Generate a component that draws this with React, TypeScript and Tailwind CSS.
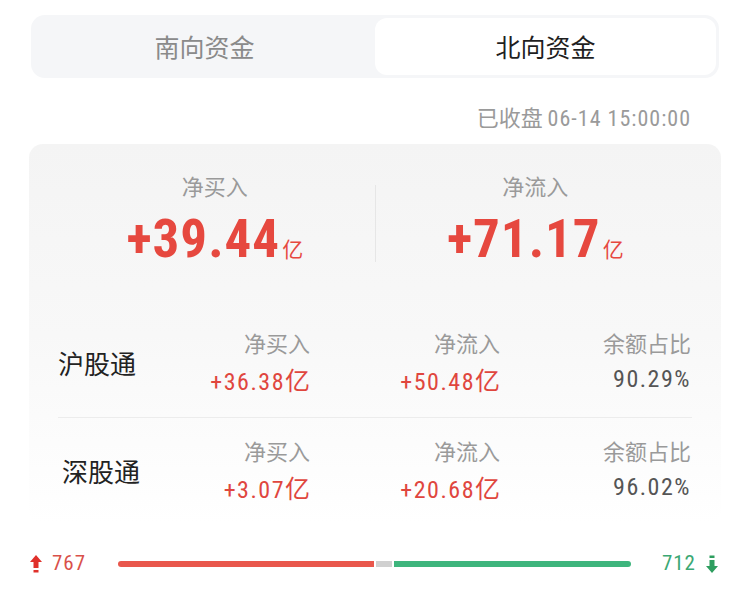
const cjk = "font-['Noto_Sans_CJK_SC',sans-serif]";
const num = "font-['Roboto_Condensed','Noto_Sans_CJK_SC',sans-serif]";

const rows = [
  { name: "沪股通", buy: "+36.38", flow: "+50.48", ratio: "90.29%" },
  { name: "深股通", buy: "+3.07", flow: "+20.68", ratio: "96.02%" },
];

function UpArrow() {
  return (
    <svg width="12" height="18" viewBox="0 0 12 18">
      <path d="M6 0 L12 7 L8.5 7 L8.5 13 L3.5 13 L3.5 7 L0 7 Z" fill="#e0312b" />
      <rect x="3.5" y="15" width="5" height="2.5" fill="#e0312b" />
    </svg>
  );
}

function DownArrow() {
  return (
    <svg width="12" height="18" viewBox="0 0 12 18">
      <rect x="3.5" y="0.5" width="5" height="2.5" fill="#2e9e5f" />
      <path d="M3.5 5 L8.5 5 L8.5 11 L12 11 L6 18 L0 11 L3.5 11 Z" fill="#2e9e5f" />
    </svg>
  );
}

function BigFigure({ label, value, side }: { label: string; value: string; side: "l" | "r" }) {
  return (
    <div className={`flex-1 flex flex-col items-center ${side === "l" ? "pl-[26px]" : "pr-[26px]"}`}>
      <div className="text-[22px] leading-[28px] text-[#9a9a9a]">{label}</div>
      <div className={`mt-[12px] h-[56px] flex items-baseline text-[#e6483f] ${num}`}>
        <span className="text-[53px] leading-[56px] font-bold tracking-[1px]">{value}</span>
        <span className={`ml-[2px] text-[21px] ${cjk}`}>亿</span>
      </div>
    </div>
  );
}

function Cell({ label, value, red = true }: { label: string; value: string; red?: boolean }) {
  return (
    <div className="flex flex-col items-end">
      <div className="text-[22px] leading-[30px] text-[#9a9a9a] whitespace-nowrap">{label}</div>
      <div
        className={`mt-[6px] flex items-baseline text-[24px] leading-[32px] whitespace-nowrap ${
          red ? "text-[#e0463e]" : "text-[#555]"
        }`}
      >
        <span className={`${num} font-normal tracking-[1.5px]`}>{value}</span>
        {red && <span className={`text-[25px] ${cjk}`}>亿</span>}
      </div>
    </div>
  );
}

export default function App() {
  return (
    <div className={`w-[750px] h-[606px] bg-white overflow-hidden ${cjk}`}>
      {/* tabs */}
      <div className="mx-[31px] mt-[15px] h-[63px] rounded-[14px] bg-[#f5f6f8] p-[3px] flex">
        <div className="flex-1 flex items-center justify-center text-[25px] text-[#8a8a8a]">
          南向资金
        </div>
        <div className="flex-1 flex items-center justify-center rounded-[12px] bg-white text-[25px] text-[#1f1f1f]">
          北向资金
        </div>
      </div>

      <div className="mt-[26px] pr-[59px] text-right text-[22px] leading-[24px] text-[#9a9a9a]">
        已收盘 <span className={`${num} text-[22px] tracking-[1px]`}>06-14 15:00:00</span>
      </div>

      {/* card */}
      <div className="mx-[29px] mt-[13px] rounded-[14px] bg-gradient-to-b from-[#f4f4f4] via-[#f8f8f8] to-white pt-[27px] pb-[18px]">
        <div className="flex">
          <BigFigure label="净买入" value="+39.44" side="l" />
          <div className="w-px bg-[#e6e6e6] mt-[14px] mb-[5px]" />
          <BigFigure label="净流入" value="+71.17" side="r" />
        </div>

        <div className="mt-[60px] px-[29px]">
          {rows.map((r, i) => (
            <div
              key={r.name}
              className={`grid grid-cols-[62px_190px_190px_191px] ${
                i === 0 ? "pb-[19px] border-b border-[#ececec]" : "pt-[17px]"
              }`}
            >
              <div
                className={`flex items-center whitespace-nowrap text-[26px] text-[#222] ${
                  i === 1 ? "pl-[4px]" : ""
                }`}
              >
                {r.name}
              </div>
              <Cell label="净买入" value={r.buy} />
              <Cell label="净流入" value={r.flow} />
              <Cell label="余额占比" value={r.ratio} red={false} />
            </div>
          ))}
        </div>
      </div>

      {/* up/down bar */}
      <div className="mt-[25px] h-[30px] flex items-center pl-[30px] pr-[32px]">
        <UpArrow />
        <span className={`ml-[10px] w-[66px] text-[21px] tracking-[1px] text-[#d9514a] ${num}`}>767</span>
        <div className="flex-1 flex h-[6px] gap-[2px]">
          <div className="w-[256px] rounded-l-full bg-[#e9574c]" />
          <div className="w-[16px] bg-[#d0d0d0]" />
          <div className="flex-1 rounded-r-full bg-[#3eb57d]" />
        </div>
        <span className={`ml-[31px] text-[21px] tracking-[1px] text-[#3ba874] ${num}`}>712</span>
        <span className="ml-[10px] flex">
          <DownArrow />
        </span>
      </div>
    </div>
  );
}
